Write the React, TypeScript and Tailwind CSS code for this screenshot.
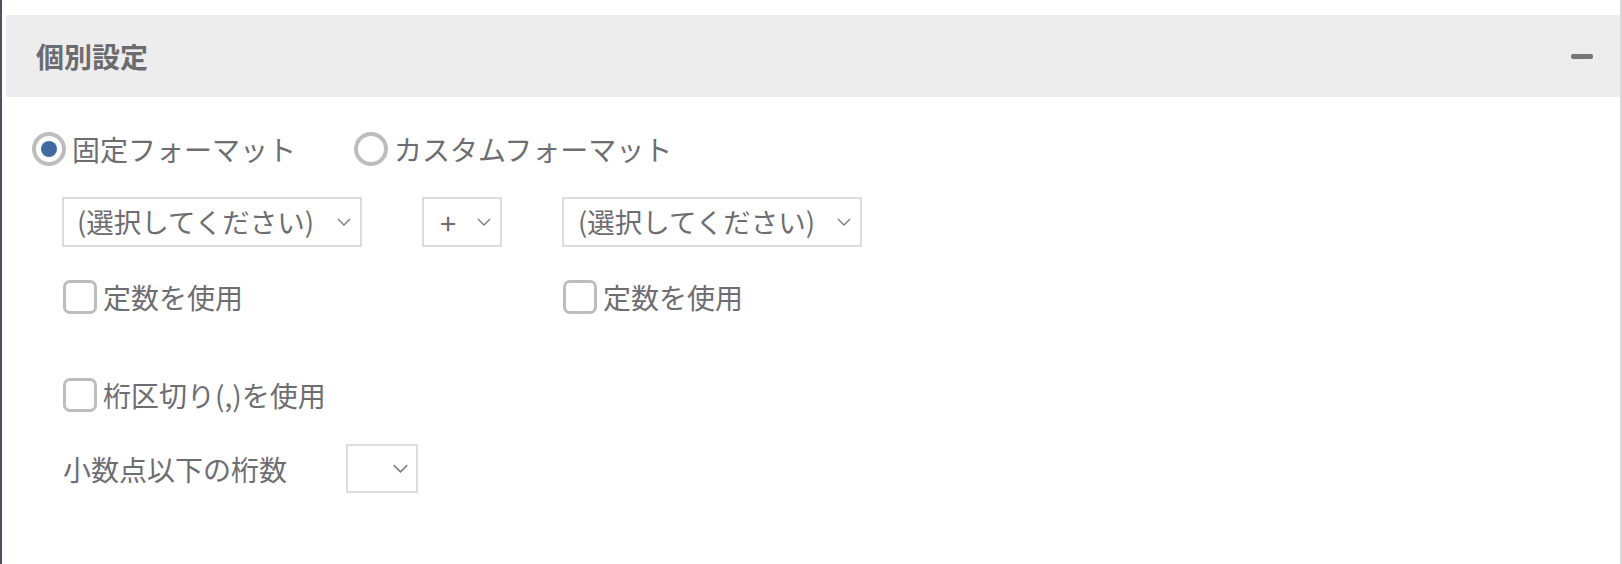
import React from "react";

const Chevron = ({ w = 14, h = 8 }: { w?: number; h?: number }) => (
  <svg width={w} height={h} viewBox="0 0 14 8" fill="none" className="shrink-0">
    <polyline points="1,1 7,7 13,1" stroke="#7a7a7f" strokeWidth="1.3" fill="none" />
  </svg>
);

const Radio = ({ checked, label }: { checked: boolean; label: string }) => (
  <div className="flex items-center">
    <div className="w-[34px] h-[34px] rounded-full border-[4px] border-[#bdbdbd] flex items-center justify-center bg-white">
      {checked && <div className="w-[16px] h-[16px] rounded-full bg-[#3f6aa1]" />}
    </div>
    <span className="ml-[6px] text-[28px] leading-none whitespace-nowrap">{label}</span>
  </div>
);

const Checkbox = ({ label }: { label: string }) => (
  <div className="flex items-center ml-[1px] h-[34px]">
    <div className="w-[34px] h-[34px] rounded-[7px] border-[3px] border-[#bdbdbd] bg-white" />
    <span className="ml-[6px] text-[28px] leading-none whitespace-nowrap">{label}</span>
  </div>
);

export default function App() {
  return (
    <div className="w-[1622px] h-[564px] bg-white border-l-[2px] border-l-[#4b5262] border-r-[2px] border-r-[#d9d9d9] pl-[4px] pt-[15px] overflow-hidden text-[#6d6d72] font-[family-name:'Noto_Sans_CJK_JP','Noto_Sans',sans-serif]">
      <div className="h-[82px] bg-[#ededed] flex items-center justify-between pl-[30px] pr-[27px]">
        <span className="text-[28px] font-bold leading-none text-[#6b6b70]">個別設定</span>
        <span className="w-[22px] h-[5px] rounded-[2px] bg-[#76767c]" />
      </div>
      <div className="pl-[26px] pt-[35px]">
        <div className="flex items-center h-[34px]">
          <Radio checked label="固定フォーマット" />
          <div className="ml-[58px]">
            <Radio checked={false} label="カスタムフォーマット" />
          </div>
        </div>
        <div className="pl-[30px]">
          <div className="mt-[31px] grid grid-cols-[300px_80px_300px] gap-x-[60px]">
            <div className="h-[50px] border-[2px] border-[#dcdcdc] flex items-center justify-between pl-[13px] pr-[9px] overflow-hidden">
              <span className="text-[27.5px] leading-none whitespace-nowrap">(選択してください)</span>
              <Chevron />
            </div>
            <div className="h-[50px] border-[2px] border-[#dcdcdc] flex items-center justify-between pl-[16px] pr-[9px]">
              <span className="text-[29px] leading-none">+</span>
              <Chevron />
            </div>
            <div className="h-[50px] border-[2px] border-[#dcdcdc] flex items-center justify-between pl-[14px] pr-[9px] overflow-hidden">
              <span className="text-[27.5px] leading-none whitespace-nowrap">(選択してください)</span>
              <Chevron />
            </div>
          </div>
          <div className="mt-[33px] grid grid-cols-[300px_80px_300px] gap-x-[60px]">
            <Checkbox label="定数を使用" />
            <div />
            <Checkbox label="定数を使用" />
          </div>
          <div className="mt-[64px]">
            <Checkbox label="桁区切り(,)を使用" />
          </div>
          <div className="mt-[32px] flex items-center">
            <span className="ml-[1px] w-[283px] text-[28px] leading-none whitespace-nowrap">小数点以下の桁数</span>
            <div className="w-[72px] h-[49px] border-[2px] border-[#dcdcdc] flex items-center justify-end pr-[7px]">
              <Chevron w={17} h={9} />
            </div>
          </div>
        </div>
      </div>
    </div>
  );
}
